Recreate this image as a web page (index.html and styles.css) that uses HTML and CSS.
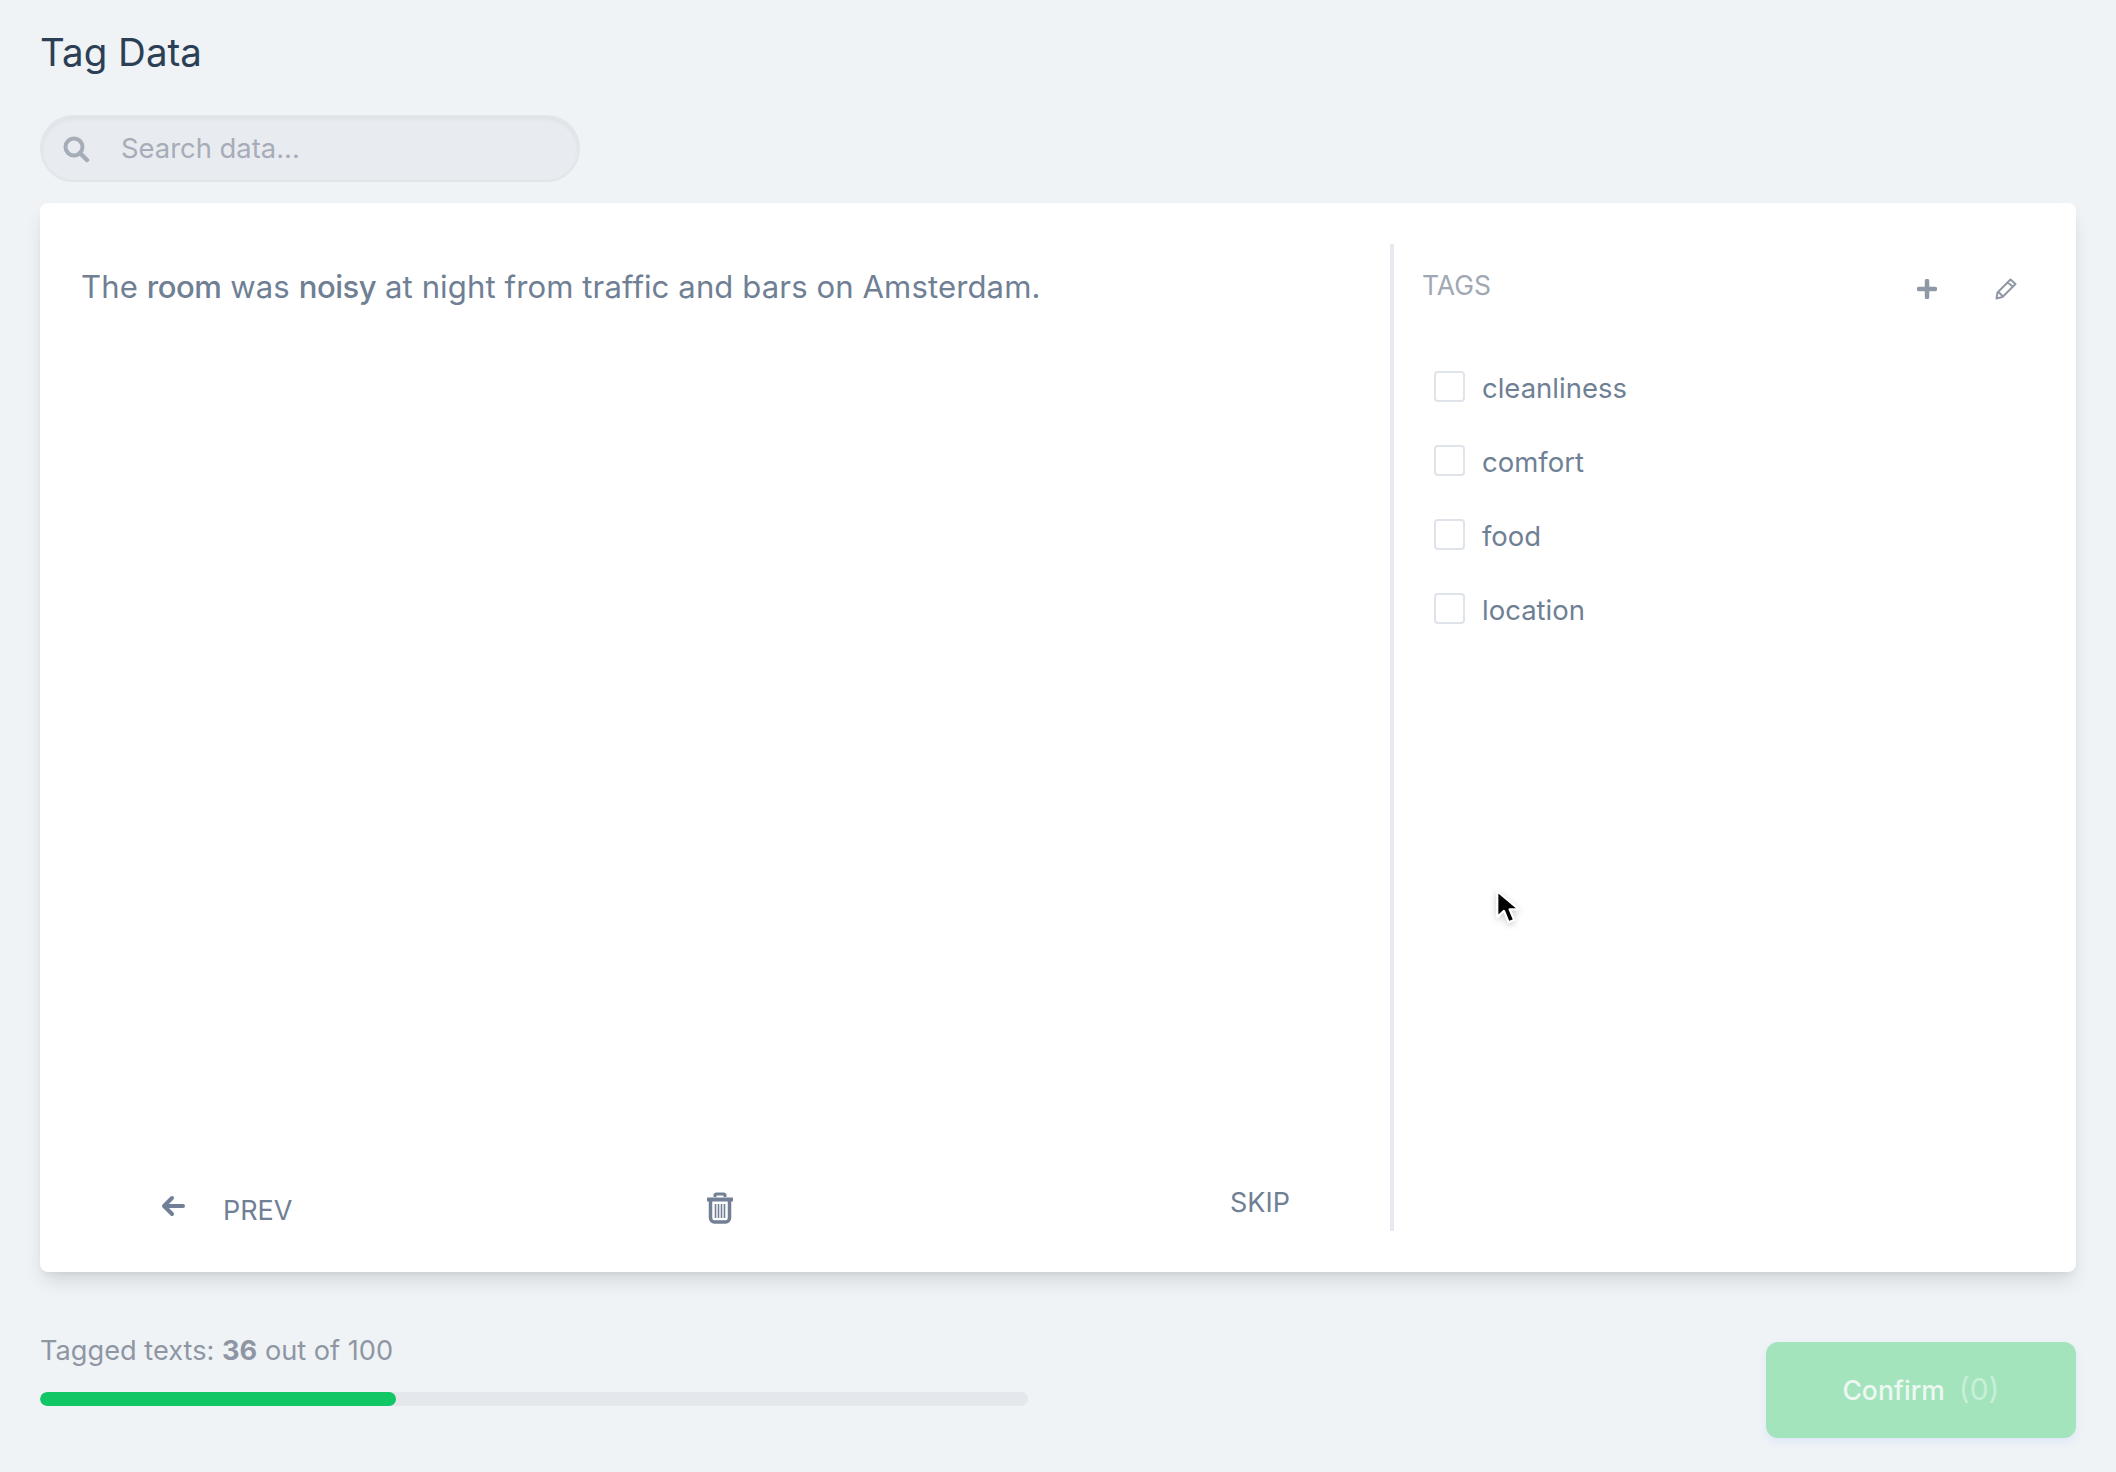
FILE: index.html
```html
<!DOCTYPE html>
<html lang="en">
<head>
    <meta charset="UTF-8">
    <title>Tag Data</title>
    <link rel="stylesheet" href="styles.css">
</head>
<body>
    <h1 class="page-title">Tag Data</h1>
    <div class="search">
        <svg class="search-icon" viewBox="0 0 28 28" width="28" height="28"><circle cx="12" cy="12" r="8.5" fill="none" stroke="#a6adb8" stroke-width="4"/><path d="M18 18l7 7" stroke="#a6adb8" stroke-width="4.5" stroke-linecap="round"/></svg>
        <span class="search-text">Search data...</span>
    </div>
    <main class="card">
        <section class="text-pane">
            <p class="sample">The <b>room</b> was <b>noisy</b> at night from traffic and bars on Amsterdam.</p>
            <div class="pane-actions">
                <button class="action prev">
                    <svg viewBox="0 0 24 22" width="24" height="22"><path d="M22 11H4M11 3l-8 8 8 8" fill="none" stroke="#718096" stroke-width="4" stroke-linecap="round" stroke-linejoin="round"/></svg>
                    <span>PREV</span>
                </button>
                <button class="action trash">
                    <svg viewBox="0 0 26 32" width="26" height="32"><path d="M8 5V3.500A1.500 1.500 0 0 1 9.500 2h7A1.500 1.500 0 0 1 18 3.500V5" fill="none" stroke="#718096" stroke-width="3"/><path d="M1 7.500h24" stroke="#718096" stroke-width="4" stroke-linecap="round"/><path d="M3.500 8v18a4 4 0 0 0 4 4h11a4 4 0 0 0 4-4V8" fill="none" stroke="#718096" stroke-width="3.500"/><path d="M8.500 12v14M11.500 12v14M14.500 12v14M17.500 12v14" stroke="#718096" stroke-width="1.600"/></svg>
                </button>
                <button class="action skip">SKIP</button>
            </div>
        </section>
        <aside class="tags-pane">
            <div class="tags-head">
                <h2>TAGS</h2>
                <div class="tags-tools">
                    <svg viewBox="0 0 20 20" width="20" height="20"><path d="M10 2v16M2 10h16" stroke="#8f98a6" stroke-width="4.500" stroke-linecap="round"/></svg>
                    <svg viewBox="0 0 22 22" width="22" height="22"><path d="M15.500 1.500l5 4.500L7.500 19l-6 1.500 1-6zM3.500 14L8 18.500M13 4.500l4.500 4" fill="none" stroke="#8f98a6" stroke-width="2" stroke-linejoin="round"/></svg>
                </div>
            </div>
            <ul class="tag-list">
                <li><span class="box"></span><span class="tag-name">cleanliness</span></li>
                <li><span class="box"></span><span class="tag-name">comfort</span></li>
                <li><span class="box"></span><span class="tag-name">food</span></li>
                <li><span class="box"></span><span class="tag-name">location</span></li>
            </ul>
        </aside>
    </main>
    <footer class="bottom">
        <div class="progress">
            <p class="progress-text">Tagged texts: <b>36</b> out of 100</p>
            <div class="bar"><div class="bar-fill" style="width: 36%"></div></div>
        </div>
        <button class="confirm">Confirm<span class="count">(0)</span></button>
    </footer>
    <svg class="cursor" viewBox="0 0 24 32" width="27" height="36"><path d="M2 2v23l6-5.500 4 10 5-2-4-9.500h8z" fill="#000" stroke="#fff" stroke-width="2" stroke-linejoin="round"/></svg>
</body>
</html>
```

FILE: styles.css
```css
* {
    box-sizing: border-box;
}

body {
    margin: 0;
    width: 2116px;
    height: 1472px;
    padding: 0 40px;
    background: #eff3f6;
    color: #6f8094;
    font-family: "Inter", "Noto Sans", sans-serif;
    position: relative;
    overflow: hidden;
}

.page-title {
    margin: 0;
    padding-top: 27px;
    height: 115px;
    font-size: 38.500px;
    line-height: 50px;
    font-weight: 400;
    color: #2d3f54;
}

.search {
    width: 540px;
    height: 67px;
    display: flex;
    align-items: center;
    padding-left: 20px;
    gap: 31px;
    background: #e8ebef;
    border: 2px solid #e2e6eb;
    border-radius: 34px;
    box-shadow: inset 0 2px 4px rgba(0, 0, 0, 0.05);
}

.search-text {
    padding-bottom: 2px;
    font-size: 27.400px;
    color: #a6adb8;
}

.card {
    margin-top: 21px;
    height: 1069px;
    display: flex;
    padding: 41px;
    background: #fff;
    border-radius: 8px;
    box-shadow: 0 12px 20px -4px rgba(0, 0, 0, 0.12), 0 4px 6px -2px rgba(0, 0, 0, 0.05);
}

.text-pane {
    width: 1309px;
    display: flex;
    flex-direction: column;
    justify-content: space-between;
}

.sample {
    margin: 0;
    padding-top: 19px;
    font-size: 31.100px;
    line-height: 48px;
    letter-spacing: 0.1px;
}

.sample b {
    font-weight: 500;
    letter-spacing: -0.5px;
}

.pane-actions {
    display: flex;
    align-items: center;
    justify-content: space-between;
    padding: 20px 100px 0 80px;
    height: 70px;
}

.action {
    display: flex;
    align-items: center;
    gap: 38px;
    padding: 0;
    border: none;
    background: none;
    color: inherit;
    font: inherit;
    font-size: 27px;
}

.prev span {
    padding-top: 8px;
}

.trash {
    margin-right: 82px;
    padding-top: 3px;
}

.skip {
    padding-bottom: 8px;
}

.tags-pane {
    flex: 1;
    border-left: 4px solid #e6eaf0;
    padding-left: 28px;
}

.tags-head {
    display: flex;
    justify-content: space-between;
    align-items: center;
    margin-top: 11px;
    padding-right: 18px;
    height: 60px;
}

.tags-head h2 {
    margin: 0;
    font-size: 26.500px;
    font-weight: 400;
    color: #a0a8b4;
}

.tags-tools {
    display: flex;
    align-items: center;
    gap: 58px;
    padding-top: 8px;
}

.tag-list {
    list-style: none;
    margin: 34px 0 0;
    padding: 0 0 0 12px;
}

.tag-list li {
    display: flex;
    align-items: center;
    gap: 17px;
    height: 74px;
    font-size: 27.500px;
}

.tag-name {
    padding-top: 4px;
}

.box {
    width: 31px;
    height: 31px;
    border: 2px solid #dfe4ea;
    border-radius: 4px;
}

.bottom {
    display: flex;
    justify-content: space-between;
    margin-top: 70px;
}

.progress {
    width: 988px;
}

.progress-text {
    margin: -9px 0 23px;
    font-size: 27.200px;
    line-height: 36px;
    color: #8f96a3;
}

.bar {
    height: 14px;
    background: #e4e7ec;
    border-radius: 7px;
    overflow: hidden;
}

.bar-fill {
    height: 100%;
    background: #10c665;
    border-radius: 7px;
}

.confirm {
    width: 310px;
    height: 96px;
    padding: 0 0 2px;
    border: none;
    border-radius: 12px;
    background: #a3e4bd;
    color: #eef8f3;
    font: inherit;
    font-size: 26.500px;
    font-weight: 500;
    box-shadow: 0 4px 8px rgba(120, 170, 255, 0.15);
}

.count {
    margin-left: 14px;
    font-size: 30px;
    font-weight: 400;
    color: #c6f0d8;
}

.cursor {
    position: absolute;
    left: 1495px;
    top: 889px;
    filter: drop-shadow(0 2px 3px rgba(0, 0, 0, 0.2));
}
```
